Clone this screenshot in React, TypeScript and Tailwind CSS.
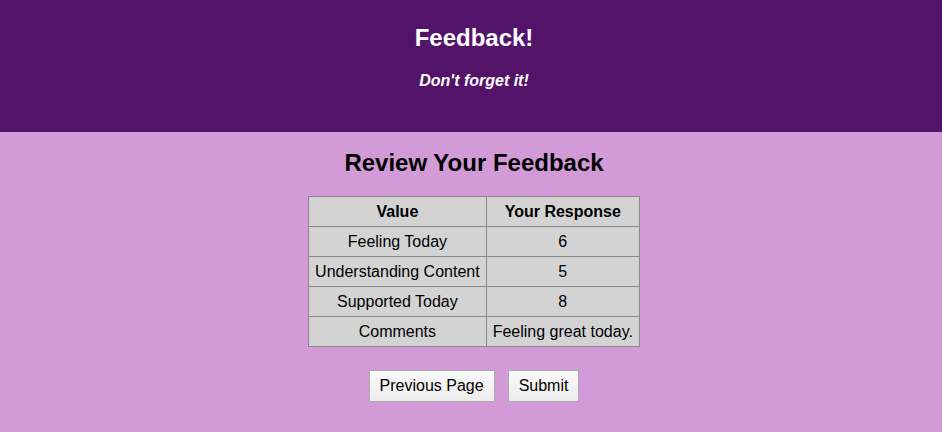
const rows = [
  ["Feeling Today", "6"],
  ["Understanding Content", "5"],
  ["Supported Today", "8"],
  ["Comments", "Feeling great today."],
];

export default function App() {
  return (
    <div className="min-h-screen bg-[#d29ad6] font-['Liberation_Sans',Arial,sans-serif] text-black">
      <header className="h-[132px] bg-[#521369] pl-[6px] pt-[24px] text-center text-white">
        <h1 className="text-[24px] leading-[28px] font-bold">Feedback!</h1>
        <p className="mt-[20px] text-[16px] leading-[18px] font-bold italic">
          Don't forget it!
        </p>
      </header>
      <main className="flex flex-col items-center pl-[6px] pt-[17px]">
        <h2 className="text-[24px] leading-[28px] font-bold">
          Review Your Feedback
        </h2>
        <table className="mt-[19px] border-collapse border border-[#888] bg-[#d3d3d3] text-[16px] leading-[18px]">
          <thead>
            <tr className="h-[30px]">
              <th className="border border-[#888] px-[6px] font-bold">Value</th>
              <th className="border border-[#888] px-[6px] font-bold">
                Your Response
              </th>
            </tr>
          </thead>
          <tbody>
            {rows.map(([label, value]) => (
              <tr key={label} className="h-[30px]">
                <td className="border border-[#888] px-[6px] text-center">
                  {label}
                </td>
                <td className="border border-[#888] px-[6px] text-center">
                  {value}
                </td>
              </tr>
            ))}
          </tbody>
        </table>
        <div className="mt-[23px] flex gap-[13px]">
          <button className="h-[32px] border border-[#aaa] bg-gradient-to-b from-[#fafafa] to-[#ececec] px-[10px] text-[16px]">
            Previous Page
          </button>
          <button className="h-[32px] border border-[#aaa] bg-gradient-to-b from-[#fafafa] to-[#ececec] px-[10px] text-[16px]">
            Submit
          </button>
        </div>
      </main>
    </div>
  );
}
